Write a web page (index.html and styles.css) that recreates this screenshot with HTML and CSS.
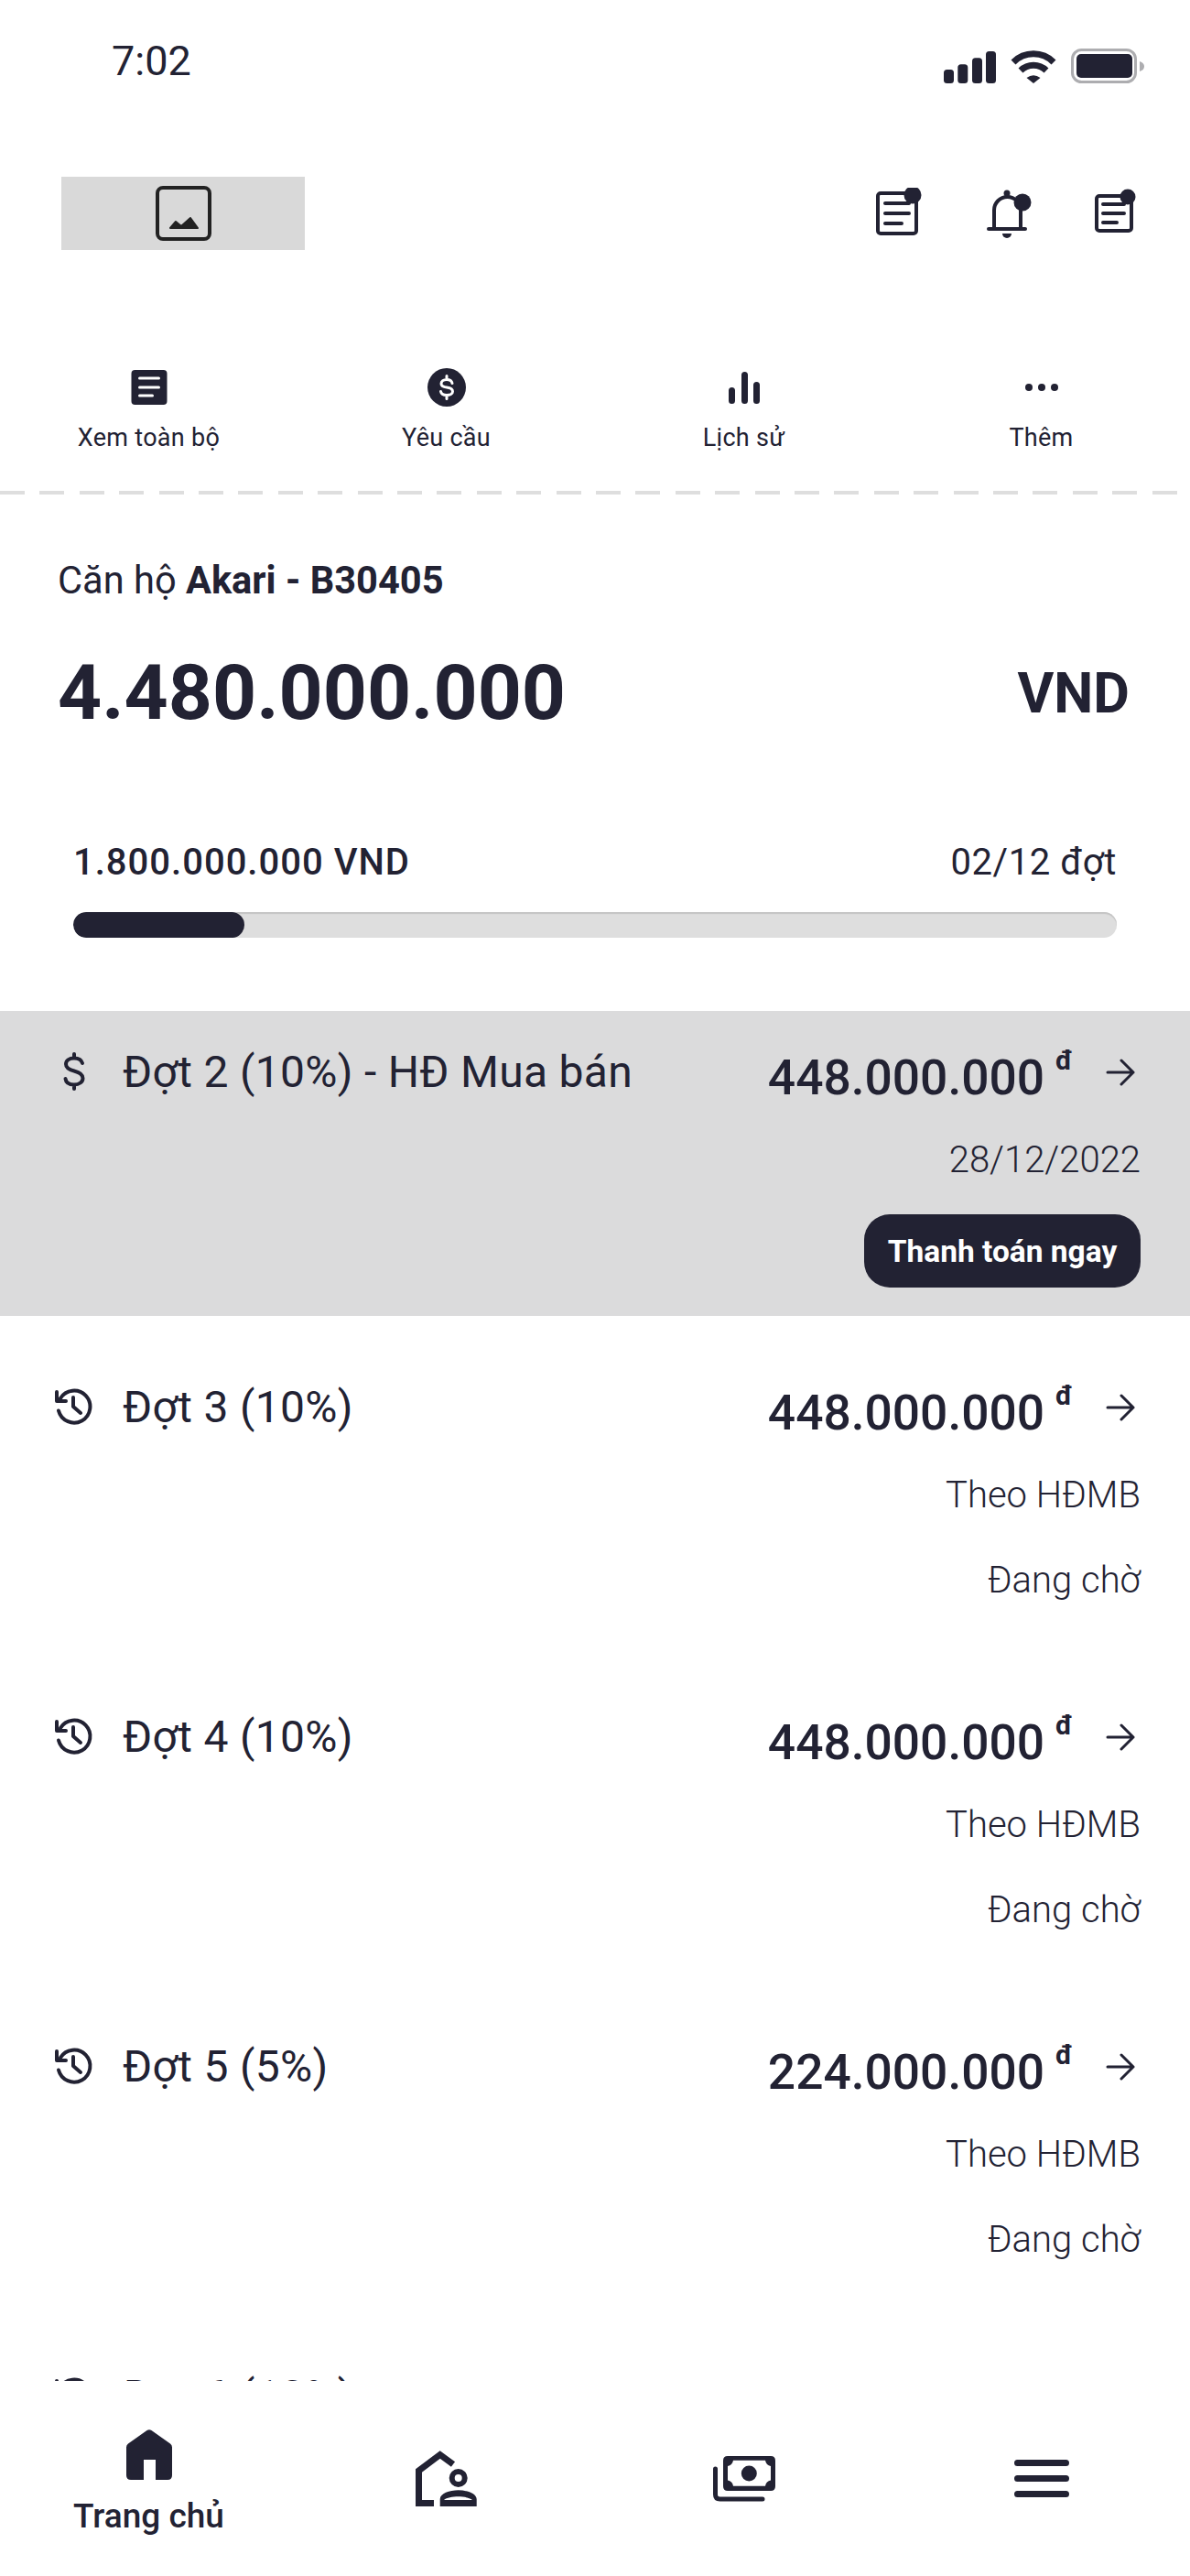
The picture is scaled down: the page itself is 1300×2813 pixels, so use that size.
FILE: index.html
```html
<!DOCTYPE html>
<html lang="vi">
<head>
    <meta charset="UTF-8">
    <meta name="viewport" content="width=device-width, initial-scale=1.0">
    <title>Trang chủ</title>
    <link rel="stylesheet" href="styles.css">
</head>
<body>
    <div class="page">
        <!-- status bar -->
        <div class="status">
            <span class="time">7:02</span>
            <div class="status-icons">
                <svg width="57" height="35" viewBox="0 0 57 35" fill="#222233">
                    <rect x="0" y="20" width="11" height="15" rx="3.5"/>
                    <rect x="15.3" y="14.3" width="11" height="20.7" rx="3.5"/>
                    <rect x="31" y="7.3" width="11" height="27.7" rx="3.5"/>
                    <rect x="46" y="0" width="11" height="35" rx="3.5"/>
                </svg>
                <svg width="50" height="36" viewBox="0 0 50 36" fill="none" stroke="#222233" stroke-width="7">
                    <path d="M3 13A31 31 0 0 1 47 13"/>
                    <path d="M11 22A20 20 0 0 1 39 22"/>
                    <path d="M17.5 30Q25 24.5 32.5 30L25 36Z" fill="#222233" stroke="none"/>
                </svg>
                <svg width="80" height="38" viewBox="0 0 80 38">
                    <rect x="1.5" y="1.5" width="69" height="35" rx="10" fill="none" stroke="#adadb0" stroke-width="3"/>
                    <rect x="6" y="6" width="61" height="26" rx="5" fill="#222233"/>
                    <path d="M75 14Q80 15.5 80 19.5Q80 23.5 75 25Z" fill="#adadb0"/>
                </svg>
            </div>
        </div>

        <!-- logo + top icons -->
        <div class="topbar">
            <div class="logo">
                <svg width="61" height="60" viewBox="0 0 61 60">
                    <rect x="2" y="2" width="57" height="56" rx="6" fill="none" stroke="#222" stroke-width="4"/>
                    <path d="M16 46L22 39L28 44L38 35L46 46Z" fill="#222" stroke="#222" stroke-width="2" stroke-linejoin="round"/>
                </svg>
            </div>
            <div class="top-icons">
                <svg width="52" height="56" viewBox="0 0 52 56" fill="none" stroke="#222233" stroke-width="4" stroke-linecap="round">
                    <rect x="4" y="6" width="42" height="44" rx="3"/>
                    <path d="M12 17H38M12 28H38M12 39H30"/>
                    <circle cx="42" cy="8" r="9.5" fill="#222233" stroke="none"/>
                </svg>
                <svg width="57" height="56" viewBox="0 0 57 56" fill="none" stroke="#222233" stroke-width="4" stroke-linecap="round">
                    <path d="M13 45V24.500a14.500 14.500 0 0 1 29 0V45"/>
                    <path d="M7 45H47"/>
                    <path d="M22 50H32A5 5 0 0 1 22 50Z" fill="#222233" stroke="none"/>
                    <circle cx="27" cy="6" r="3.500" fill="#222233" stroke="none"/>
                    <circle cx="44" cy="16" r="9.500" fill="#222233" stroke="none"/>
                </svg>
                <svg width="45" height="56" viewBox="0 0 45 56" fill="none" stroke="#222233" stroke-width="4" stroke-linecap="round">
                    <rect x="2" y="9" width="38" height="38" rx="3"/>
                    <path d="M9 18H32M9 28H32M9 38H24"/>
                    <circle cx="36" cy="10" r="8.500" fill="#222233" stroke="none"/>
                </svg>
            </div>
        </div>

        <!-- quick actions -->
        <div class="quick">
            <div class="quick-item">
                <svg width="44" height="44" viewBox="0 0 44 44">
                    <rect x="2.500" y="3" width="39" height="38" rx="4" fill="#222233"/>
                    <path d="M11.500 12H32.500M11.500 22H32.500M11.500 31H25.500" stroke="#fff" stroke-width="3" stroke-linecap="round"/>
                </svg>
                <span>Xem toàn bộ</span>
            </div>
            <div class="quick-item">
                <svg width="44" height="44" viewBox="0 0 44 44">
                    <circle cx="22" cy="22" r="21" fill="#222233"/>
                    <path d="M28 17.500C27.500 15 25 13.500 22 13.500C18.500 13.500 16 15.500 16 18C16 20.500 18 21.500 22 22C26 22.500 28.500 24 28.500 26.500C28.500 29 25.500 30.500 22 30.500C18.500 30.500 16 29 15.500 26.500M22 9.500V13.500M22 30.500V34.500" fill="none" stroke="#fff" stroke-width="3" stroke-linecap="round"/>
                </svg>
                <span>Yêu cầu</span>
            </div>
            <div class="quick-item">
                <svg width="44" height="44" viewBox="0 0 44 44" stroke="#222233" stroke-width="7" stroke-linecap="round">
                    <path d="M8.500 25.500V36.500M22.500 8.500V36.500M35.500 19.500V36.500"/>
                </svg>
                <span>Lịch sử</span>
            </div>
            <div class="quick-item">
                <svg width="44" height="44" viewBox="0 0 44 44" fill="#222233">
                    <circle cx="8" cy="22" r="4"/>
                    <circle cx="22" cy="22" r="4"/>
                    <circle cx="36" cy="22" r="4"/>
                </svg>
                <span>Thêm</span>
            </div>
        </div>

        <div class="divider"></div>

        <!-- apartment summary -->
        <div class="hero">
            <div class="hero-name">Căn hộ <b>Akari - B30405</b></div>
            <div class="hero-total">
                <span class="hero-amount">4.480.000.000</span>
                <span class="hero-unit">VND</span>
            </div>
            <div class="progress-meta">
                <span class="progress-paid">1.800.000.000 VND</span>
                <span class="progress-count">02/12 đợt</span>
            </div>
            <div class="progress"><div class="progress-fill" style="width: 16.4%"></div></div>
        </div>

        <!-- payment list -->
        <div class="list">
            <div class="row row-due">
                <div class="row-title">
                    <svg class="row-icon" width="52" height="52" viewBox="0 0 52 52" fill="none" stroke="#222233" stroke-width="4" stroke-linecap="round">
                        <path d="M35 17C34 13.500 31 11.500 26 11.500C20.500 11.500 17 14 17 18C17 22 20 24 26 25.500C32 27 35.500 29 35.500 33.500C35.500 37.500 31.500 40.500 26 40.500C20.500 40.500 17 38 16.500 34M26 7V11.500M26 40.500V45"/>
                    </svg>
                    <span>Đợt 2 (10%) - HĐ Mua bán</span>
                </div>
                <div class="row-right">
                    <div class="amount">
                        <span class="amount-value">448.000.000</span>
                        <span class="amount-unit">đ</span>
                        <svg class="arrow" width="32" height="30" viewBox="0 0 32 30" fill="none" stroke="#222233" stroke-width="3" stroke-linecap="round" stroke-linejoin="round">
                            <path d="M2 15H30M17 2L30 15L17 28"/>
                        </svg>
                    </div>
                    <div class="sub">28/12/2022</div>
                    <button class="pay-btn">Thanh toán ngay</button>
                </div>
            </div>

            <div class="row">
                <div class="row-title">
                    <svg class="row-icon" width="52" height="52" viewBox="0 0 52 52" fill="none" stroke="#222233" stroke-width="4" stroke-linecap="round" stroke-linejoin="round">
                        <path d="M11 17A17.500 17.500 0 1 1 9 30.500M7 10V20H17M25 16V26L33 33"/>
                    </svg>
                    <span>Đợt 3 (10%)</span>
                </div>
                <div class="row-right">
                    <div class="amount">
                        <span class="amount-value">448.000.000</span>
                        <span class="amount-unit">đ</span>
                        <svg class="arrow" width="32" height="30" viewBox="0 0 32 30" fill="none" stroke="#222233" stroke-width="3" stroke-linecap="round" stroke-linejoin="round">
                            <path d="M2 15H30M17 2L30 15L17 28"/>
                        </svg>
                    </div>
                    <div class="sub">Theo HĐMB</div>
                    <div class="sub">Đang chờ</div>
                </div>
            </div>

            <div class="row">
                <div class="row-title">
                    <svg class="row-icon" width="52" height="52" viewBox="0 0 52 52" fill="none" stroke="#222233" stroke-width="4" stroke-linecap="round" stroke-linejoin="round">
                        <path d="M11 17A17.500 17.500 0 1 1 9 30.500M7 10V20H17M25 16V26L33 33"/>
                    </svg>
                    <span>Đợt 4 (10%)</span>
                </div>
                <div class="row-right">
                    <div class="amount">
                        <span class="amount-value">448.000.000</span>
                        <span class="amount-unit">đ</span>
                        <svg class="arrow" width="32" height="30" viewBox="0 0 32 30" fill="none" stroke="#222233" stroke-width="3" stroke-linecap="round" stroke-linejoin="round">
                            <path d="M2 15H30M17 2L30 15L17 28"/>
                        </svg>
                    </div>
                    <div class="sub">Theo HĐMB</div>
                    <div class="sub">Đang chờ</div>
                </div>
            </div>

            <div class="row">
                <div class="row-title">
                    <svg class="row-icon" width="52" height="52" viewBox="0 0 52 52" fill="none" stroke="#222233" stroke-width="4" stroke-linecap="round" stroke-linejoin="round">
                        <path d="M11 17A17.500 17.500 0 1 1 9 30.500M7 10V20H17M25 16V26L33 33"/>
                    </svg>
                    <span>Đợt 5 (5%)</span>
                </div>
                <div class="row-right">
                    <div class="amount">
                        <span class="amount-value">224.000.000</span>
                        <span class="amount-unit">đ</span>
                        <svg class="arrow" width="32" height="30" viewBox="0 0 32 30" fill="none" stroke="#222233" stroke-width="3" stroke-linecap="round" stroke-linejoin="round">
                            <path d="M2 15H30M17 2L30 15L17 28"/>
                        </svg>
                    </div>
                    <div class="sub">Theo HĐMB</div>
                    <div class="sub">Đang chờ</div>
                </div>
            </div>

            <div class="row">
                <div class="row-title">
                    <svg class="row-icon" width="52" height="52" viewBox="0 0 52 52" fill="none" stroke="#222233" stroke-width="4" stroke-linecap="round" stroke-linejoin="round">
                        <path d="M11 17A17.500 17.500 0 1 1 9 30.500M7 10V20H17M25 16V26L33 33"/>
                    </svg>
                    <span>Đợt 6 (10%)</span>
                </div>
            </div>
        </div>

        <!-- bottom navigation -->
        <div class="nav">
            <div class="nav-item nav-active">
                <svg width="50" height="55" viewBox="0 0 50 55" fill="#222233">
                    <path d="M22.500 1Q25 -0.500 27.500 1L48 15.500Q50 17 50 19.500V50Q50 55 45 55H32V33H19V55H5Q0 55 0 50V19.500Q0 17 2 15.500Z"/>
                </svg>
                <span>Trang chủ</span>
            </div>
            <div class="nav-item">
                <svg width="67" height="61" viewBox="0 0 67 61">
                    <path d="M20 57.500H3.500V22L26.700 4.500L41 15" fill="none" stroke="#222233" stroke-width="7"/>
                    <circle cx="46.700" cy="30" r="7" fill="none" stroke="#222233" stroke-width="6"/>
                    <path fill-rule="evenodd" d="M26.700 61V53C26.700 47 37 43.300 46.700 43.300C56.400 43.300 66.700 47 66.700 53V61ZM31 54H62C56 49 37 49 31 54Z" fill="#222233"/>
                </svg>
            </div>
            <div class="nav-item">
                <svg width="68" height="50" viewBox="0 0 68 50">
                    <path fill-rule="evenodd" d="M16 0H63Q68 0 68 5V33Q68 38 63 38H16Q11 38 11 33V5Q11 0 16 0ZM22 4.700Q21 10 16 11V26.500Q21 27.500 22 32.700H57Q58 27.500 63 26.500V11Q58 10 57 4.700Z" fill="#222233"/>
                    <circle cx="39.300" cy="19" r="8.500" fill="#222233"/>
                    <path d="M2.500 14V42Q2.500 47 7.500 47H54" fill="none" stroke="#222233" stroke-width="5" stroke-linecap="round"/>
                </svg>
            </div>
            <div class="nav-item">
                <svg width="60" height="41" viewBox="0 0 60 41" stroke="#222233" stroke-width="7" stroke-linecap="round">
                    <path d="M3.500 3.500H56.500M3.500 20.500H56.500M3.500 37.500H56.500"/>
                </svg>
            </div>
        </div>
    </div>
</body>
</html>
```
FILE: styles.css
```css
* {
    box-sizing: border-box;
}
body {
    margin: 0;
    background-color: #fff;
    color: #222233;
    font-family: Roboto, "Noto Sans", sans-serif;
}
svg {
    display: block;
    flex-shrink: 0;
}
.page {
    width: 1300px;
    height: 2813px;
    display: flex;
    flex-direction: column;
    overflow: hidden;
}

/* status bar */
.status {
    height: 144px;
    padding: 53px 50px 0 122px;
    display: flex;
    justify-content: space-between;
    align-items: flex-start;
}
.time {
    font-size: 45px;
    line-height: 28px;
}
.status-icons {
    display: flex;
    align-items: flex-end;
    gap: 16px;
}

/* top bar */
.topbar {
    padding: 49px 59px 0 67px;
    display: flex;
    justify-content: space-between;
    align-items: center;
}
.logo {
    width: 266px;
    height: 80px;
    background-color: #d9d9d9;
    display: flex;
    justify-content: center;
    align-items: center;
}
.top-icons {
    display: flex;
    gap: 66px;
}

/* quick actions */
.quick {
    padding-top: 128px;
    display: grid;
    grid-template-columns: repeat(4, 1fr);
}
.quick-item {
    display: flex;
    flex-direction: column;
    align-items: center;
    gap: 15px;
    font-size: 27px;
    line-height: 36px;
    letter-spacing: 0.3px;
}
.divider {
    height: 4px;
    margin-top: 40px;
    background: repeating-linear-gradient(90deg, #dedede 0 27px, transparent 27px 43.4px);
}

/* summary */
.hero {
    padding: 69px 66px 80px 63px;
}
.hero-name {
    font-size: 41.6px;
    line-height: 50px;
}
.hero-name b {
    font-weight: 700;
}
.hero-total {
    margin-top: 48px;
    display: flex;
    justify-content: space-between;
    align-items: center;
    line-height: 100px;
}
.hero-amount {
    font-size: 84px;
    font-weight: 700;
}
.hero-unit {
    font-size: 61px;
    font-weight: 700;
}
.progress-meta {
    margin-top: 111px;
    padding: 0 14px 0 17px;
    display: flex;
    justify-content: space-between;
    font-size: 40px;
    line-height: 48px;
    letter-spacing: 1px;
}
.progress-paid {
    font-weight: 500;
}
.progress-count {
    letter-spacing: 0.6px;
}
.progress {
    margin: 30px 14px 0 17px;
    height: 28px;
    border-radius: 14px;
    background-color: #dedede;
    box-shadow: inset 0 2px 1px #c4c4c4;
    overflow: hidden;
}
.progress-fill {
    height: 100%;
    border-radius: 14px;
    background-color: #222233;
}

/* payment rows */
.list {
    flex: 1;
    min-height: 0;
    overflow: hidden;
}
.row {
    height: 360px;
    padding: 67px 54px 0 55px;
    display: flex;
    justify-content: space-between;
}
.row-due {
    height: 333px;
    padding-top: 34px;
    background-color: #dbdbdc;
}
.row-title {
    height: 64px;
    display: flex;
    align-items: center;
    gap: 27px;
    font-size: 48px;
    letter-spacing: 0.3px;
}
.row-right {
    display: flex;
    flex-direction: column;
    align-items: flex-end;
}
.amount {
    height: 64px;
    display: flex;
    align-items: center;
}
.amount-value {
    padding-top: 14px;
    font-size: 53.3px;
    font-weight: 500;
    line-height: 74px;
}
.amount-unit {
    align-self: flex-start;
    margin-left: 12px;
    font-size: 30px;
    font-weight: 700;
    line-height: 40px;
}
.arrow {
    margin: 2px 6px 0 36px;
}
.sub {
    margin-top: 37px;
    font-size: 40px;
    font-weight: 300;
    line-height: 56px;
}
.pay-btn {
    width: 302px;
    height: 80px;
    margin-top: 31px;
    border: none;
    border-radius: 28px;
    background-color: #222233;
    color: #fff;
    font-family: inherit;
    font-size: 33.5px;
    font-weight: 700;
    padding: 0;
}

/* bottom nav */
.nav {
    height: 213px;
    background-color: #fff;
    display: grid;
    grid-template-columns: repeat(4, 1fr);
    align-items: center;
}
.nav-item {
    display: flex;
    flex-direction: column;
    align-items: center;
    gap: 22px;
    font-size: 37px;
    font-weight: 500;
    line-height: 36px;
}
.nav-active {
    align-self: start;
    padding-top: 53px;
}
```
